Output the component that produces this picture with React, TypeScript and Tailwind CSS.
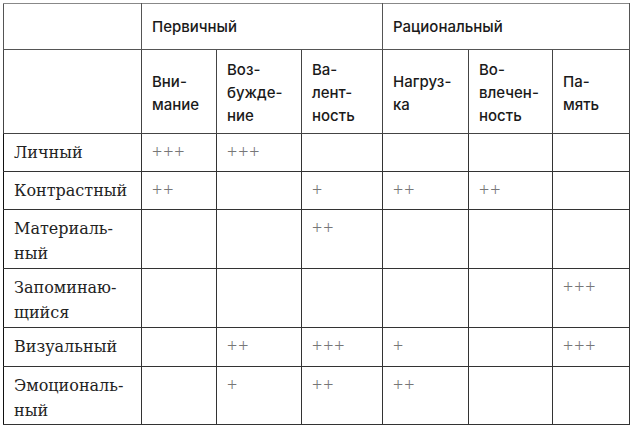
const groups = [
  { name: 'Первичный', span: 3 },
  { name: 'Рациональный', span: 3 },
];

const columns = [
  ['Вни-', 'мание'],
  ['Воз-', 'бужде-', 'ние'],
  ['Ва-', 'лент-', 'ность'],
  ['Нагруз-', 'ка'],
  ['Во-', 'влечен-', 'ность'],
  ['Па-', 'мять'],
];

const widths = [138, 75, 85, 81, 86, 84, 77];

const rows: { label: string[]; h: string; cells: string[] }[] = [
  { label: ['Личный'], h: 'h-[38px]', cells: ['+++', '+++', '', '', '', ''] },
  { label: ['Контрастный'], h: 'h-[38px]', cells: ['++', '', '+', '++', '++', ''] },
  { label: ['Материаль-', 'ный'], h: 'h-[59px]', cells: ['', '', '++', '', '', ''] },
  { label: ['Запоминаю-', 'щийся'], h: 'h-[59px]', cells: ['', '', '', '', '', '+++'] },
  { label: ['Визуальный'], h: 'h-[39px]', cells: ['', '++', '+++', '+', '', '+++'] },
  { label: ['Эмоциональ-', 'ный'], h: 'h-[58px]', cells: ['', '+', '++', '++', '', ''] },
];

export default function App() {
  return (
    <div className="w-[630px] h-[426px] bg-white pt-[3px] pl-[3px]">
      <table className="table-fixed border-collapse w-[626px] text-[#1a1a1a]">
        <colgroup>
          {widths.map((w, i) => (
            <col key={i} style={{ width: w }} />
          ))}
        </colgroup>
        <thead className="font-['Inter','Noto_Sans',sans-serif]">
          <tr className="h-[46px]">
            <th className="border border-[#555] border-t-[#888]" />
            {groups.map((g) => (
              <th
                key={g.name}
                colSpan={g.span}
                className="border border-[#555] border-t-[#888] px-[10px] text-left align-middle text-[15px] font-medium leading-[23px]"
              >
                {g.name}
              </th>
            ))}
          </tr>
          <tr className="h-[84px]">
            <th className="border border-[#444]" />
            {columns.map((c, i) => (
              <th
                key={i}
                className="border border-[#444] px-[10px] pt-[2px] text-left align-middle text-[15px] font-medium leading-[23px]"
              >
                {c.map((l) => (
                  <div key={l}>{l}</div>
                ))}
              </th>
            ))}
          </tr>
        </thead>
        <tbody>
          {rows.map((r) => (
            <tr key={r.label.join('')} className={r.h}>
              <td className="border border-[#333] border-l-[#111] px-[10px] pt-[6px] align-top font-['DejaVu_Serif',serif] text-[16px] leading-[25px] text-[#222]">
                {r.label.map((l) => (
                  <div key={l}>{l}</div>
                ))}
              </td>
              {r.cells.map((c, i) => (
                <td
                  key={i}
                  className="border border-[#333] px-[10px] pt-[6px] align-top font-['Liberation_Serif',serif] text-[18px] leading-[25px] text-[#777] tracking-[1px]"
                >
                  {c}
                </td>
              ))}
            </tr>
          ))}
        </tbody>
      </table>
    </div>
  );
}
